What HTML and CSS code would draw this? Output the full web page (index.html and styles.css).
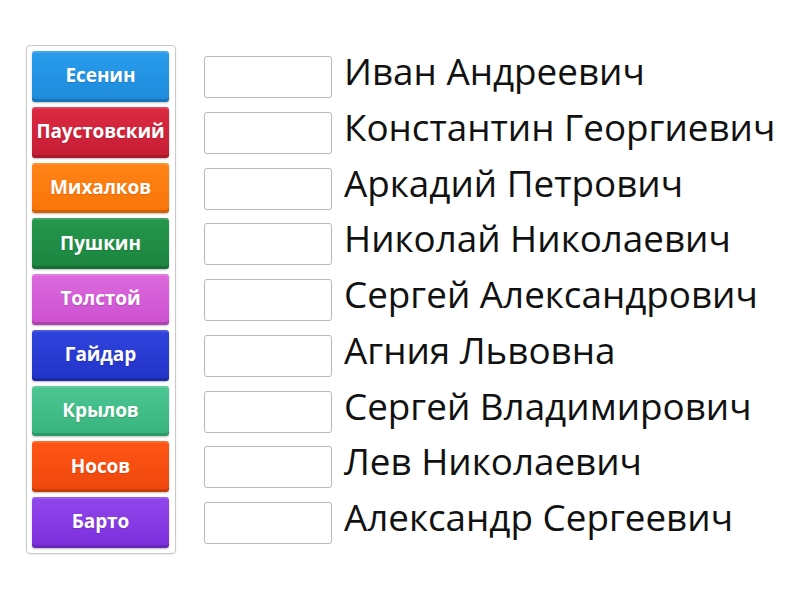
FILE: index.html
```html
<!DOCTYPE html>
<html lang="ru">
<head>
<meta charset="utf-8">
<link rel="stylesheet" href="styles.css">
</head>
<body>
<div class="game">
  <div class="panel">
    <div class="tile c1">Есенин</div>
    <div class="tile c2">Паустовский</div>
    <div class="tile c3">Михалков</div>
    <div class="tile c4">Пушкин</div>
    <div class="tile c5">Толстой</div>
    <div class="tile c6">Гайдар</div>
    <div class="tile c7">Крылов</div>
    <div class="tile c8">Носов</div>
    <div class="tile c9">Барто</div>
  </div>
  <div class="targets">
    <div class="row"><div class="slot"></div><div class="label">Иван Андреевич</div></div>
    <div class="row"><div class="slot"></div><div class="label">Константин Георгиевич</div></div>
    <div class="row"><div class="slot"></div><div class="label">Аркадий Петрович</div></div>
    <div class="row"><div class="slot"></div><div class="label">Николай Николаевич</div></div>
    <div class="row"><div class="slot"></div><div class="label">Сергей Александрович</div></div>
    <div class="row"><div class="slot"></div><div class="label">Агния Львовна</div></div>
    <div class="row"><div class="slot"></div><div class="label">Сергей Владимирович</div></div>
    <div class="row"><div class="slot"></div><div class="label">Лев Николаевич</div></div>
    <div class="row"><div class="slot"></div><div class="label">Александр Сергеевич</div></div>
  </div>
</div>
</body>
</html>
```

FILE: styles.css
```css
html, body {
  margin: 0;
  padding: 0;
  background: #ffffff;
}
body {
  font-family: "Open Sans", "Liberation Sans", sans-serif;
  width: 800px;
  height: 600px;
  overflow: hidden;
}
.game {
  display: flex;
  align-items: flex-start;
  padding: 45px 0 0 26px;
}
.panel {
  display: flex;
  flex-direction: column;
  gap: 5px;
  width: 137px;
  padding: 5px 6px 5px 5px;
  border: 1px solid #c9c9c9;
  border-radius: 4px;
  box-shadow: 0 1px 2px rgba(0,0,0,0.08);
}
.tile {
  height: 50.75px;
  box-sizing: border-box;
  border-radius: 3px;
  display: flex;
  align-items: center;
  justify-content: center;
  color: #fff;
  font-weight: 700;
  font-size: 19px;
  letter-spacing: -0.1px;
  white-space: nowrap;
  padding-bottom: 2px;
  box-shadow: inset 0 -3px 0 rgba(0,0,0,0.16), inset 0 2px 0 rgba(255,255,255,0.12), 0 1px 2px rgba(0,0,0,0.25);
  text-shadow: 0 1px 1px rgba(0,0,0,0.15);
}
.c1 { background: linear-gradient(#2a9cec, #1e8ada); }
.c2 { background: linear-gradient(#dc2a42, #c51d34); }
.c3 { background: linear-gradient(#ff8418, #f87408); }
.c4 { background: linear-gradient(#25974c, #1c8440); }
.c5 { background: linear-gradient(#dc6ade, #cc4fd0); }
.c6 { background: linear-gradient(#2f43dc, #2233c8); }
.c7 { background: linear-gradient(#4cc592, #38b47e); }
.c8 { background: linear-gradient(#ff5616, #ee460c); }
.c9 { background: linear-gradient(#9146ec, #7b2fdc); }

.targets {
  display: flex;
  flex-direction: column;
  margin-left: 28px;
  margin-top: 11px;
}
.row {
  display: flex;
  align-items: flex-start;
  height: 55.75px;
}
.slot {
  width: 128px;
  height: 42px;
  box-sizing: border-box;
  border: 1px solid #b8b8b8;
  border-radius: 3px;
  background: #fff;
  flex: none;
}
.label {
  margin-left: 12px;
  margin-top: -6px;
  font-size: 36.8px;
  line-height: 42px;
  color: #111;
  white-space: nowrap;
}
```
